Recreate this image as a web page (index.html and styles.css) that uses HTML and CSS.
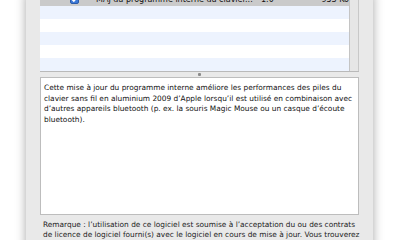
FILE: index.html
```html
<!DOCTYPE html>
<html>
  <head>
    <meta charset="utf-8">
    <title>Mise à jour de logiciels</title>
    <link rel="stylesheet" href="styles.css">
  </head>
  <body>
    <div class="window">
      <div class="list-area">
        <div class="list">
          <div class="row selected">
            <span class="check">
              <svg width="9" height="9" viewBox="0 0 9 9"><rect x="0.5" y="0.5" width="8" height="8" rx="1.5" fill="#3b78d8" stroke="#2a5aa8"/><path d="M2.2 4.6 L3.8 6.2 L6.8 2.6" fill="none" stroke="#fff" stroke-width="1.4"/></svg>
            </span>
            <span class="name">MAJ du programme interne du clavier...</span>
            <span class="version">1.0</span>
            <span class="size">953 Ko</span>
          </div>
          <div class="row"></div>
          <div class="row"></div>
          <div class="row"></div>
          <div class="row"></div>
          <div class="row"></div>
        </div>
        <div class="scroll"></div>
      </div>
      <div class="splitter"><span class="dimple"></span></div>
      <div class="description">
        <p>Cette mise à jour du programme interne améliore les performances des piles du<br>clavier sans fil en aluminium 2009 d’Apple lorsqu’il est utilisé en combinaison avec<br>d’autres appareils bluetooth (p. ex. la souris Magic Mouse ou un casque d’écoute<br>bluetooth).</p>
      </div>
      <p class="note">Remarque : l’utilisation de ce logiciel est soumise à l’acceptation du ou des contrats<br>de licence de logiciel fourni(s) avec le logiciel en cours de mise à jour. Vous trouverez<br>ces contrats de licence de logiciel à l’adresse suivante.</p>
    </div>
  </body>
</html>
```

FILE: styles.css
```css
* {
  margin: 0;
  padding: 0;
  box-sizing: border-box;
}
html, body {
  height: 100%;
}
body {
  background: #fff;
  font-family: "DejaVu Sans", "Liberation Sans", sans-serif;
  overflow: hidden;
}
.window {
  margin-left: 26px;
  margin-top: -7px;
  width: 347px;
  height: 260px;
  padding-left: 14px;
  background: #e9e9e9;
  box-shadow: 0 0 10px rgba(0, 0, 0, 0.35);
}
.list-area {
  display: flex;
  width: 319px;
  border-bottom: 1px solid #b9b9b9;
}
.list {
  width: 310px;
  border-right: 1px solid #c4c4c4;
}
.scroll {
  flex: 1;
  background: #e6e6e6;
  border-right: 1px solid #c8c8c8;
}
.row {
  height: 13px;
  background: #edf3fe;
}
.row:nth-child(odd) {
  background: #fff;
}
.row.selected {
  display: flex;
  align-items: center;
  background: #cacaca;
  font-size: 8px;
  color: #111;
  white-space: nowrap;
}
.check {
  display: flex;
  margin-left: 30px;
  width: 9px;
}
.name {
  margin-left: 17px;
  width: 165px;
}
.version {
  width: 52px;
}
.size {
  width: 36px;
  text-align: right;
}
.splitter {
  display: flex;
  justify-content: center;
  align-items: center;
  height: 5px;
  width: 319px;
}
.dimple {
  width: 3px;
  height: 3px;
  background: #8a8a8a;
  border-radius: 1px;
}
.description {
  width: 319px;
  height: 138px;
  background: #fff;
  border: 1px solid #bdbdbd;
  padding: 5px 3px;
  font-size: 7.4px;
  line-height: 10.5px;
  color: #111;
  white-space: nowrap;
}
.note {
  margin-top: 5px;
  padding-left: 3px;
  font-size: 7.4px;
  line-height: 9.5px;
  color: #222;
  white-space: nowrap;
}
```
